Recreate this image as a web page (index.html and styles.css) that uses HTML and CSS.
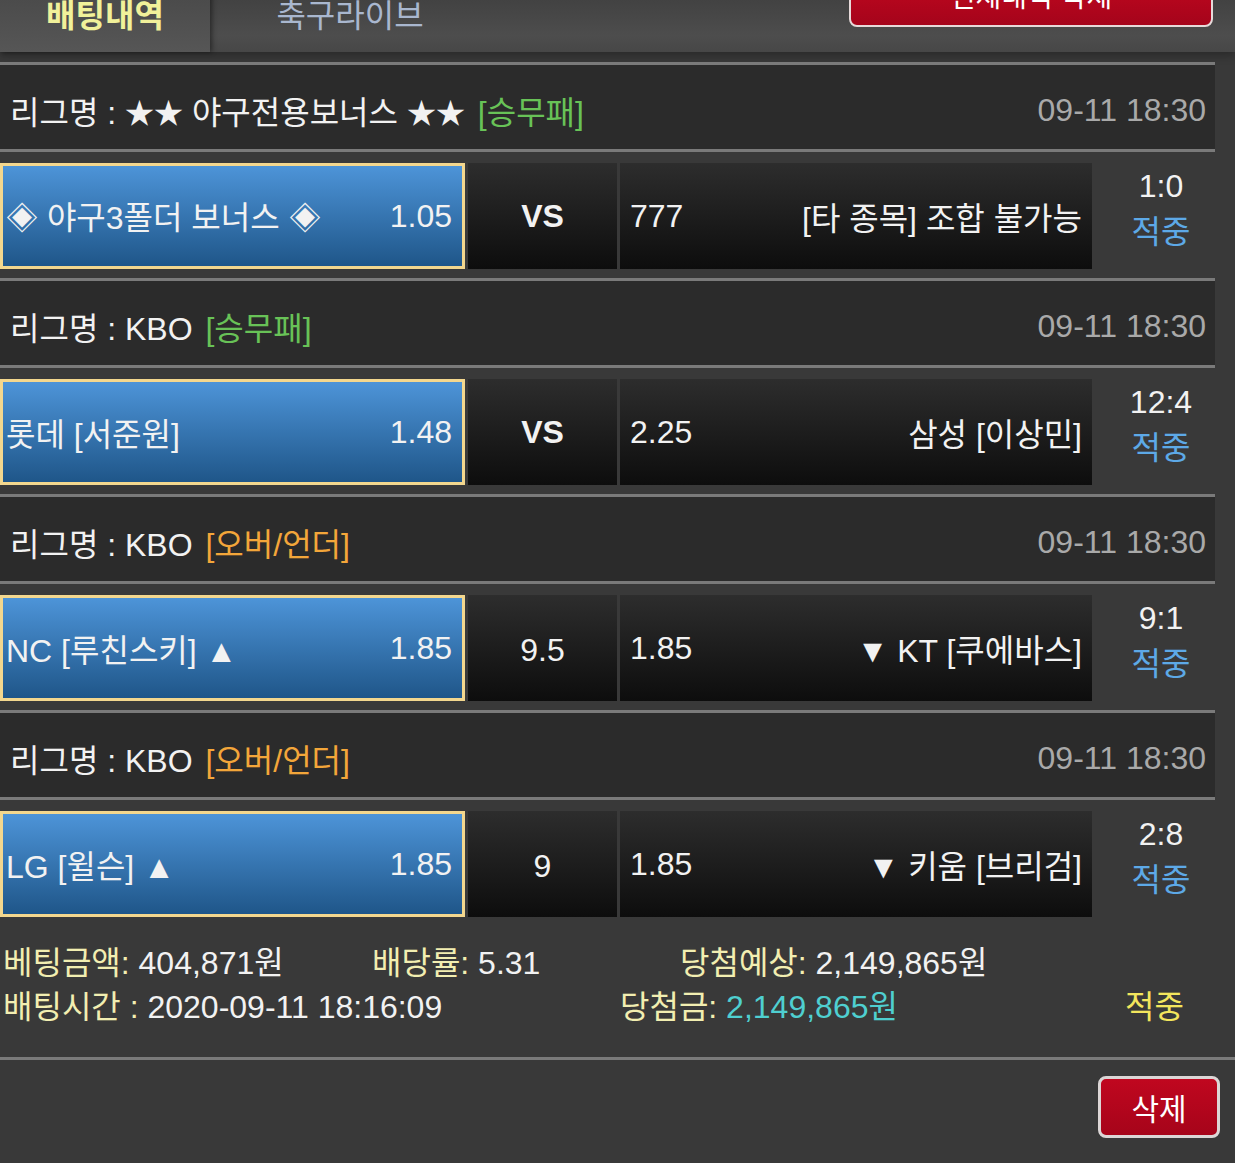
FILE: index.html
```html
<!DOCTYPE html>
<html lang="ko">
<head>
    <meta charset="UTF-8">
    <meta name="viewport" content="width=device-width, initial-scale=1.0">
    <title>배팅내역</title>
    <link rel="stylesheet" href="styles.css">
</head>
<body>
    <div class="page">
        <div class="header">
            <div class="tab active">배팅내역</div>
            <div class="tab">축구라이브</div>
            <button class="btn-clear">전체내역 삭제</button>
        </div>

        <div class="list">
            <div class="league">
                <span>리그명 : <i class="star">★★</i> 야구전용보너스 <i class="star">★★</i> <em class="type green">[승무패]</em></span>
                <span class="date">09-11 18:30</span>
            </div>
            <div class="bet">
                <div class="pick"><span>◈ 야구3폴더 보너스 ◈</span><span>1.05</span></div>
                <div class="mid vs">VS</div>
                <div class="away"><span>777</span><span>[타 종목] 조합 불가능</span></div>
                <div class="result"><span>1:0</span><span class="hit">적중</span></div>
            </div>

            <div class="league">
                <span>리그명 : KBO <em class="type green">[승무패]</em></span>
                <span class="date">09-11 18:30</span>
            </div>
            <div class="bet">
                <div class="pick"><span>롯데 [서준원]</span><span>1.48</span></div>
                <div class="mid vs">VS</div>
                <div class="away"><span>2.25</span><span>삼성 [이상민]</span></div>
                <div class="result"><span>12:4</span><span class="hit">적중</span></div>
            </div>

            <div class="league">
                <span>리그명 : KBO <em class="type orange">[오버/언더]</em></span>
                <span class="date">09-11 18:30</span>
            </div>
            <div class="bet">
                <div class="pick"><span>NC [루친스키] ▲</span><span>1.85</span></div>
                <div class="mid">9.5</div>
                <div class="away"><span>1.85</span><span>▼ KT [쿠에바스]</span></div>
                <div class="result"><span>9:1</span><span class="hit">적중</span></div>
            </div>

            <div class="league">
                <span>리그명 : KBO <em class="type orange">[오버/언더]</em></span>
                <span class="date">09-11 18:30</span>
            </div>
            <div class="bet">
                <div class="pick"><span>LG [윌슨] ▲</span><span>1.85</span></div>
                <div class="mid">9</div>
                <div class="away"><span>1.85</span><span>▼ 키움 [브리검]</span></div>
                <div class="result"><span>2:8</span><span class="hit">적중</span></div>
            </div>
        </div>

        <div class="summary">
            <div class="sum-line">
                <span class="col-a"><b>베팅금액:</b> 404,871원</span>
                <span class="col-b"><b>배당률:</b> 5.31</span>
                <span><b>당첨예상:</b> 2,149,865원</span>
            </div>
            <div class="sum-line">
                <span class="col-c"><b>배팅시간 :</b> 2020-09-11 18:16:09</span>
                <span class="col-d"><b>당첨금:</b> <i class="win">2,149,865원</i></span>
                <span class="status">적중</span>
            </div>
        </div>

        <div class="actions">
            <button class="btn-del">삭제</button>
        </div>
    </div>
</body>
</html>
```

FILE: styles.css
```css
body {
    margin: 0;
    background-color: #393939;
    color: #f2f2f2;
    font-family: "Liberation Sans", "Noto Sans CJK KR", sans-serif;
    font-size: 32px;
    overflow: hidden;
}
.page {
    margin-top: -30px;
}
.header {
    display: flex;
    height: 82px;
    background: linear-gradient(#393939, #4d4d4d 80%, #474747);
    box-shadow: 0 4px 8px rgba(0, 0, 0, 0.25);
}
.tab {
    width: 280px;
    padding-top: 28px;
    line-height: 36px;
    text-align: center;
    color: #a9b7cf;
}
.tab.active {
    width: 210px;
    color: #f1f19a;
    font-weight: bold;
    background: linear-gradient(#454545, #565656);
    box-shadow: 2px 0 5px rgba(0, 0, 0, 0.45);
}
.btn-clear {
    margin-left: auto;
    margin-right: 22px;
    width: 364px;
    height: 57px;
    padding-bottom: 8px;
    border: 2px solid #e6dada;
    border-radius: 8px;
    background: linear-gradient(#c4081f, #a5041b);
    color: #fff;
    font-family: inherit;
    font-size: 28px;
}
.list {
    width: 1215px;
    margin-top: 10px;
}
.league {
    display: flex;
    justify-content: space-between;
    align-items: center;
    box-sizing: border-box;
    height: 90px;
    padding: 6px 9px 0 10px;
    background-color: #2b2b2b;
    border-top: 3px solid #7a7a7a;
    border-bottom: 3px solid #7a7a7a;
}
.star {
    font-style: normal;
    font-size: 29px;
}
.type {
    font-style: normal;
    margin-left: 4px;
}
.green {
    color: #68c257;
}
.orange {
    color: #f3a63a;
}
.date {
    color: #a9a9a9;
}
.bet {
    display: flex;
    gap: 3px;
    height: 106px;
    margin: 11px 0 9px;
}
.pick {
    display: flex;
    justify-content: space-between;
    align-items: center;
    box-sizing: border-box;
    width: 465px;
    padding: 0 10px 0 3px;
    border: 3px solid #f3d78e;
    background: linear-gradient(#4d94d8, #1f5689);
}
.mid {
    width: 149px;
    display: flex;
    justify-content: center;
    align-items: center;
    padding-top: 4px;
    box-sizing: border-box;
    background: linear-gradient(#2d2d2d, #0d0d0d);
}
.mid.vs {
    font-weight: bold;
    padding-top: 0;
}
.away {
    width: 472px;
    display: flex;
    justify-content: space-between;
    align-items: center;
    box-sizing: border-box;
    padding: 0 10px;
    background: linear-gradient(#2d2d2d, #0d0d0d);
}
.result {
    flex: 1;
    display: flex;
    flex-direction: column;
    align-items: center;
    padding-left: 12px;
    line-height: 46px;
}
.hit {
    color: #5da9e7;
}
.summary {
    padding: 15px 0 28px 3px;
    border-bottom: 3px solid #7a7a7a;
    line-height: 44px;
}
.sum-line {
    display: flex;
    height: 44px;
}
.sum-line b {
    font-weight: normal;
    color: #f2eeb1;
}
.col-a {
    width: 369px;
}
.col-b {
    width: 308px;
}
.col-c {
    width: 617px;
}
.col-d {
    width: 505px;
}
.win {
    font-style: normal;
    color: #4fcfd0;
}
.status {
    color: #f3e65d;
}
.actions {
    display: flex;
    justify-content: flex-end;
    padding: 16px 15px 0 0;
}
.btn-del {
    width: 122px;
    height: 62px;
    border: 3px solid #dcd6d6;
    border-radius: 8px;
    background: linear-gradient(#c0071f, #a6041a);
    color: #fff;
    font-family: inherit;
    font-size: 30px;
}
```
